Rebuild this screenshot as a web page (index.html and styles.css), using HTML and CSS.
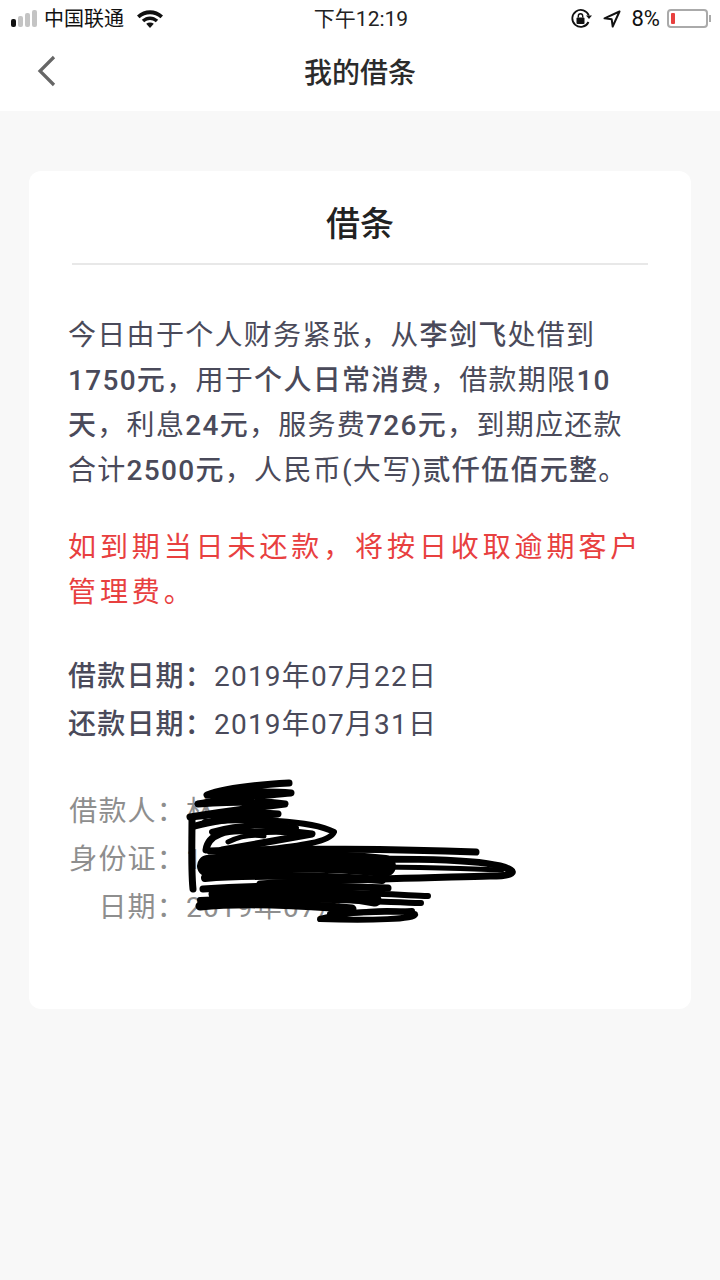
FILE: index.html
```html
<!DOCTYPE html>
<html lang="zh-CN">

<head>
    <meta charset="UTF-8">
    <meta name="viewport" content="width=device-width, initial-scale=1.0">
    <title>我的借条</title>
    <link rel="stylesheet" href="styles.css">
</head>

<body>
    <header class="top">
        <div class="status">
            <div class="status-side">
                <span class="signal"><i class="on"></i><i></i><i></i><i></i></span>
                <span class="carrier">中国联通</span>
                <svg class="wifi" width="26" height="19" viewBox="0 0 26 19">
                    <path d="M0 6.500C7.500 -.5 18.500 -.5 26 6.500L23.500 9.300C17.500 4 8.500 4 2.500 9.300Z" />
                    <path d="M4.800 10.800C10 6.300 16 6.300 21.200 10.800L18.800 13.300C15 10.200 11 10.200 7.200 13.300Z" />
                    <path d="M9.200 14.800C11.500 13 14.500 13 16.800 14.800L13 19Z" />
                </svg>
            </div>
            <div class="clock">下午12:19</div>
            <div class="status-side right">
                <svg class="lock" width="22" height="22" viewBox="0 0 22 22">
                    <path d="M18.500 14A8.500 8.500 0 1 1 18.800 7.500" fill="none" stroke="#111" stroke-width="1.800" />
                    <path d="M16 7.500h6l-3 3.500z" fill="#111" />
                    <rect x="6.500" y="9.500" width="8" height="6.500" rx="1" fill="#111" />
                    <path d="M8.300 9.500V8a2.200 2.200 0 0 1 4.400 0v1.500" fill="none" stroke="#111" stroke-width="1.400" />
                </svg>
                <svg class="arrow" width="18" height="18" viewBox="0 0 18 18">
                    <path d="M16.500 1.500L1.500 8.300l7.200 1 1 7.200z" fill="none" stroke="#111" stroke-width="2" stroke-linejoin="round" />
                </svg>
                <span class="percent">8%</span>
                <span class="battery"><i></i></span>
                <span class="battery-tip"></span>
            </div>
        </div>
        <nav class="navbar">
            <svg class="back" width="20" height="32" viewBox="0 0 20 32">
                <path d="M17 2L3 16l14 14" fill="none" stroke="#666" stroke-width="3.200" />
            </svg>
            <h2>我的借条</h2>
        </nav>
    </header>

    <section class="page">
        <div class="card">
            <h1>借条</h1>
            <div class="content">
                <p class="para">今日由于个人财务紧张，从<b>李剑飞</b>处借到<br><b>1750元</b>，用于<b>个人日常消费</b>，借款期限<b>10<br>天</b>，利息<b>24元</b>，服务费<b>726元</b>，到期应还款<br>合计<b>2500元</b>，人民币(大写)<b>贰仟伍佰元整</b>。</p>
                <p class="warn">如到期当日未还款，将按日收取逾期客户<br>管理费。</p>
                <ul class="dates">
                    <li><b>借款日期：</b>2019年07月22日</li>
                    <li><b>还款日期：</b>2019年07月31日</li>
                </ul>
                <ul class="signer">
                    <li><span class="label">借款人：</span>林</li>
                    <li><span class="label">身份证：</span>1</li>
                    <li><span class="label">日期：</span>2019年07月</li>
                </ul>
            </div>
            <!-- the scribble over the signer's details -->
            <svg class="scribble" width="340" height="160" viewBox="179 772 340 160">
                <g fill="none" stroke="#000" stroke-linecap="round" stroke-linejoin="round">
                    <path stroke-width="7" d="M289 783C255 785 225 788 207 795C240 792 270 791 291 793C260 796 225 798 198 804C230 802 265 801 285 804C250 808 220 812 190 817C225 813 255 812 278 814C240 818 215 820 195 826" />
                    <path stroke-width="7" d="M192 818C192 845 191 870 193 889" />
                    <path stroke-width="6" d="M205 822C250 818 310 820 334 832C330 842 300 846 262 850C235 853 215 858 203 868" />
                    <path stroke-width="7" d="M206 850C208 835 225 828 255 832C280 830 300 832 312 834C285 839 250 845 222 850" />
                    <path stroke-width="6" d="M212 832C240 824 270 824 296 828" />
                    <path stroke-width="5" d="M228 842C240 836 252 834 264 836" />
                    <path stroke-width="7" d="M210 851C290 848 400 849 476 852" />
                    <path stroke-width="7" d="M300 861C380 858 470 858 500 866C522 872 512 876 490 876C420 878 330 880 260 884" />
                    <path stroke-width="22" d="M208 866C260 860 330 860 385 866" />
                    <path stroke-width="8" d="M205 878C250 874 330 876 382 880" />
                    <path stroke-width="5" d="M300 867C380 866 450 868 502 870" />
                    <path stroke-width="7" d="M203 889C270 884 340 886 388 888" />
                    <path stroke-width="6" d="M240 893C310 890 380 894 428 896" />
                    <path stroke-width="6" d="M200 900C280 897 360 901 421 903" />
                    <path stroke-width="13" d="M215 894C270 890 330 892 375 900" />
                    <path stroke-width="9" d="M200 906C240 902 300 904 352 909" />
                    <path stroke-width="6" d="M320 919C345 912 395 908 415 914C418 919 370 921 320 919Z" />
                    <path stroke-width="6" d="M330 914C360 912 390 912 412 911" />
                </g>
            </svg>
        </div>
    </section>
</body>

</html>
```

FILE: styles.css
```css
* {
    box-sizing: border-box;
    margin: 0;
    padding: 0;
}

body {
    background-color: #f8f8f8;
    font-family: "Roboto", "Noto Sans CJK SC", sans-serif;
    color: #4a4a5a;
    height: 1280px;
    overflow: hidden;
}

ul {
    list-style: none;
}

.top {
    background-color: #fff;
    height: 111px;
}

.status {
    height: 37px;
    display: flex;
    align-items: center;
    justify-content: space-between;
    padding: 0 9px 0 11px;
    color: #111;
}

.status-side {
    display: flex;
    align-items: center;
    width: 250px;
}

.status-side.right {
    justify-content: flex-end;
}

.signal {
    display: flex;
    align-items: flex-end;
    gap: 2px;
    height: 17px;
    margin-right: 7px;
}

.signal i {
    width: 5px;
    background-color: #c4c4c4;
    border-radius: 2px;
    height: 17px;
}

.signal i:nth-child(1) {
    height: 8px;
}

.signal i:nth-child(2) {
    height: 11px;
}

.signal i:nth-child(3) {
    height: 14px;
}

.signal i.on {
    background-color: #111;
}

.carrier {
    font-size: 20px;
    margin-right: 13px;
    line-height: 24px;
}

.wifi {
    fill: #111;
}

.clock {
    font-size: 21px;
    line-height: 24px;
    color: #222;
}

.lock {
    margin-right: 11px;
}

.arrow {
    margin-right: 11px;
}

.percent {
    font-size: 22px;
    margin-right: 7px;
}

.battery {
    display: block;
    width: 41px;
    height: 19px;
    border: 2px solid #aaa;
    border-radius: 4px;
    padding: 2px;
}

.battery i {
    display: block;
    width: 4px;
    height: 100%;
    background-color: #e8403f;
    border-radius: 1px;
}

.battery-tip {
    width: 2px;
    height: 7px;
    background-color: #aaa;
    margin-left: 1px;
}

.navbar {
    height: 68px;
    display: flex;
    align-items: center;
    justify-content: center;
    position: relative;
}

.navbar h2 {
    font-size: 28px;
    font-weight: 500;
    color: #2b2b2b;
}

.back {
    position: absolute;
    left: 37px;
    top: 18px;
}

.page {
    padding: 60px 29px 0;
}

.card {
    background-color: #fff;
    border-radius: 12px;
    height: 838px;
    padding: 0 43px;
    position: relative;
}

.card h1 {
    font-size: 34px;
    font-weight: 500;
    color: #222;
    text-align: center;
    height: 94px;
    line-height: 106px;
    border-bottom: 2px solid #e8e8e8;
}

.content {
    margin-left: -4px;
    margin-right: -40px;
    padding-top: 48px;
    font-size: 28px;
}

.content b {
    font-weight: 500;
}

.para {
    line-height: 45px;
    letter-spacing: 1.300px;
    white-space: nowrap;
}

.warn {
    margin-top: 32px;
    line-height: 45px;
    letter-spacing: 3.900px;
    color: #e8403f;
    white-space: nowrap;
}

.dates {
    margin-top: 38px;
    line-height: 48px;
    letter-spacing: 1.200px;
}

.signer {
    margin-top: 39px;
    line-height: 48px;
    letter-spacing: 1.200px;
    color: #8e8e8e;
}

.signer .label {
    display: inline-block;
    width: 118px;
    text-align: right;
}

.scribble {
    position: absolute;
    left: 150px;
    top: 601px;
}
```
